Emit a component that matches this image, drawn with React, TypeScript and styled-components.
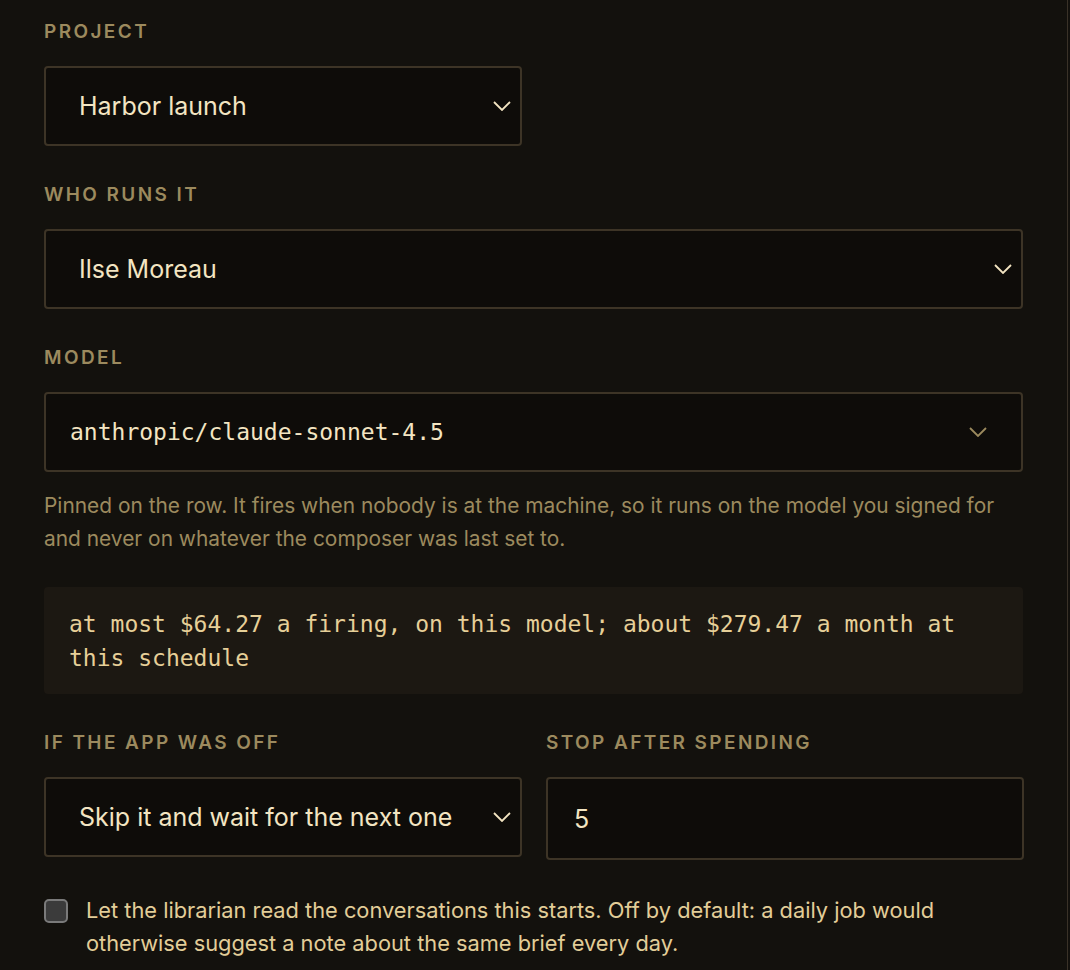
import React from 'react';
import styled, { createGlobalStyle } from 'styled-components';

const GlobalStyle = createGlobalStyle`
  html, body {
    margin: 0;
    padding: 0;
    background: #13110d;
  }
  body {
    font-family: Inter, "Noto Sans", sans-serif;
  }
`;

const Panel = styled.div`
  width: 1068px;
  min-height: 970px;
  box-sizing: border-box;
  border-right: 1px solid #3a3228;
  background: #13110d;
  padding: 20px 44px 0 44px;
  display: flex;
  flex-direction: column;
`;

const Field = styled.div<{ $gap?: number }>`
  display: flex;
  flex-direction: column;
  margin-bottom: ${({ $gap }) => ($gap ?? 37)}px;
  min-width: 0;
`;

const Label = styled.div`
  font-size: 19px;
  line-height: 24px;
  font-weight: 600;
  letter-spacing: 2.4px;
  color: #9c8a5e;
  text-transform: uppercase;
  margin-bottom: 22px;
`;

const Box = styled.div<{ $width?: number; $pad?: number; $height?: number }>`
  width: ${({ $width }) => ($width ? `${$width}px` : '100%')};
  height: ${({ $height }) => $height ?? 80}px;
  box-sizing: border-box;
  border: 2px solid #3d3426;
  border-radius: 4px;
  background: #0e0c09;
  display: flex;
  align-items: center;
  padding-left: ${({ $pad }) => $pad ?? 33}px;
`;

const Value = styled.span`
  flex: 1;
  font-size: 25px;
  color: #f3e5c2;
  white-space: nowrap;
`;

const MonoValue = styled.span`
  flex: 1;
  font-family: "DejaVu Sans Mono", "Liberation Mono", monospace;
  font-size: 23px;
  color: #f3e5c2;
`;

const Chevron = styled.svg<{ $inset: number }>`
  flex: none;
  margin-right: ${({ $inset }) => $inset}px;
`;

const Help = styled.p`
  margin: 17px 0 32px;
  font-size: 20.9px;
  line-height: 33px;
  color: #9c8a5e;
`;

const Cost = styled.div`
  background: #1c1812;
  border-radius: 4px;
  padding: 20px 24px 19px 25px;
  font-family: "DejaVu Sans Mono", "Liberation Mono", monospace;
  font-size: 23px;
  line-height: 34px;
  color: #e6cf98;
  margin-bottom: 37px;
`;

const Row = styled.div`
  display: grid;
  grid-template-columns: 478px 478px;
  column-gap: 24px;
`;

const CheckRow = styled.label`
  display: flex;
  align-items: flex-start;
  gap: 18px;
`;

const CheckBox = styled.span`
  flex: none;
  width: 24px;
  height: 24px;
  box-sizing: border-box;
  margin-top: 5px;
  border: 2px solid #7a7a7a;
  border-radius: 5px;
  background: #3b3b3b;
`;

const CheckText = styled.span`
  font-size: 21.8px;
  line-height: 33px;
  color: #e2cd98;
`;

const ChevronIcon = ({ color, inset }: { color: string; inset: number }) => (
  <Chevron $inset={inset} width="18" height="10" viewBox="0 0 18 10" fill="none">
    <path d="M1 1l8 8 8-8" stroke={color} strokeWidth="1.8" />
  </Chevron>
);

export default function App() {
  return (
    <>
      <GlobalStyle />
      <Panel>
        <Field>
          <Label>Project</Label>
          <Box $width={478}>
            <Value>Harbor launch</Value>
            <ChevronIcon color="#f3e5c2" inset={9} />
          </Box>
        </Field>
        <Field>
          <Label>Who runs it</Label>
          <Box>
            <Value>Ilse Moreau</Value>
            <ChevronIcon color="#f3e5c2" inset={9} />
          </Box>
        </Field>
        <Field $gap={0}>
          <Label>Model</Label>
          <Box $pad={24}>
            <MonoValue>anthropic/claude-sonnet-4.5</MonoValue>
            <ChevronIcon color="#9c8a5e" inset={34} />
          </Box>
        </Field>
        <Help>
          Pinned on the row. It fires when nobody is at the machine, so it runs on the model you signed for
          and never on whatever the composer was last set to.
        </Help>
        <Cost>at most $64.27 a firing, on this model; about $279.47 a month at this schedule</Cost>
        <Row>
          <Field $gap={34}>
            <Label>If the app was off</Label>
            <Box>
              <Value>Skip it and wait for the next one</Value>
              <ChevronIcon color="#f3e5c2" inset={9} />
            </Box>
          </Field>
          <Field $gap={34}>
            <Label>Stop after spending</Label>
            <Box $pad={26} $height={83}>
              <Value>5</Value>
            </Box>
          </Field>
        </Row>
        <CheckRow>
          <CheckBox />
          <CheckText>
            Let the librarian read the conversations this starts. Off by default: a daily job would otherwise
            suggest a note about the same brief every day.
          </CheckText>
        </CheckRow>
      </Panel>
    </>
  );
}
